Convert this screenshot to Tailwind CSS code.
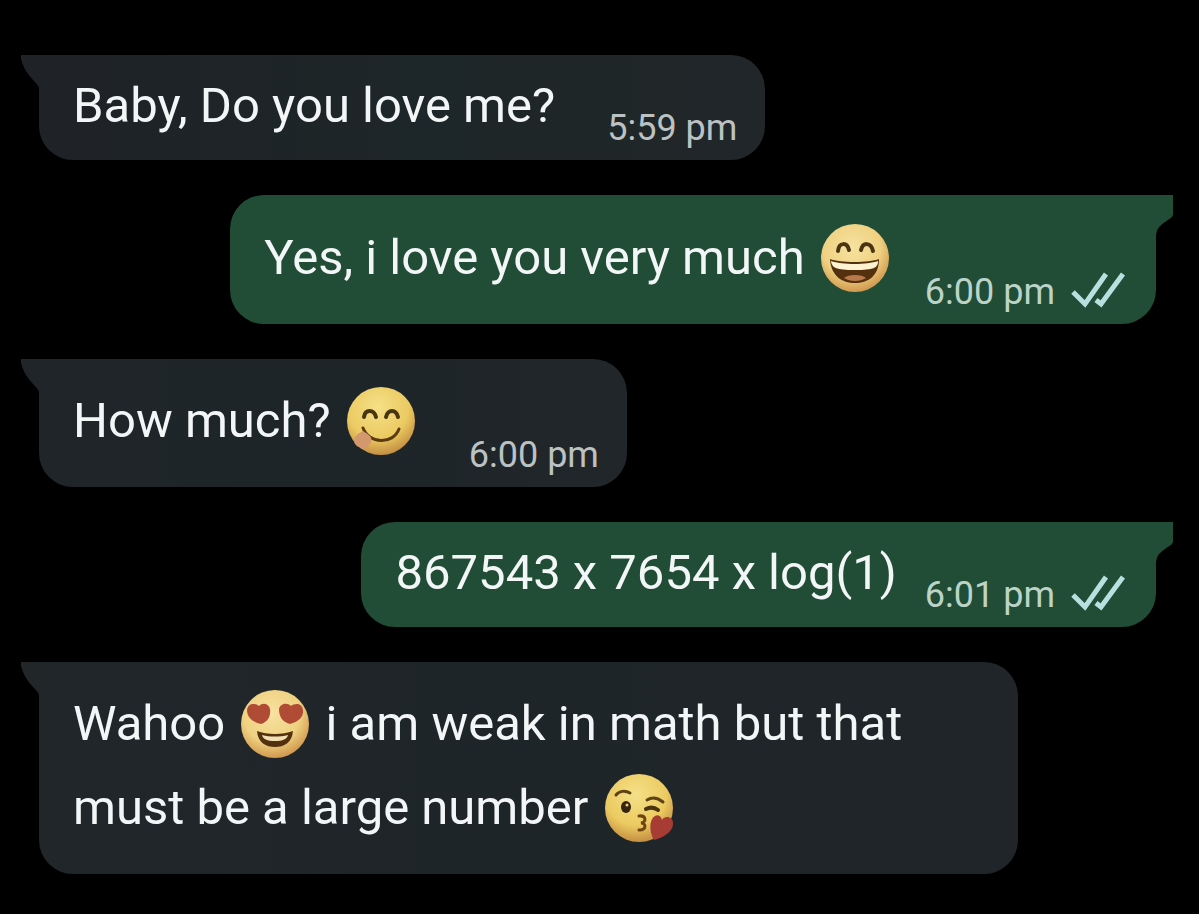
<!DOCTYPE html>
<html lang="en">
<head>
    <meta charset="UTF-8">
    <meta name="viewport" content="width=device-width, initial-scale=1.0">
    <title>Chat</title>
    <script src="https://cdn.jsdelivr.net/npm/@tailwindcss/browser@4"></script>
</head>
<body class="bg-black min-h-screen font-[Roboto,sans-serif] text-[#f3f6f7]">

    <!-- Shared shapes -->
    <svg class="absolute w-0 h-0" aria-hidden="true">
        <defs>
            <radialGradient id="face" cx="0.45" cy="0.35" r="0.65">
                <stop offset="0" stop-color="#f7e2a0"/>
                <stop offset="0.65" stop-color="#efd181"/>
                <stop offset="1" stop-color="#d0994f"/>
            </radialGradient>
            <radialGradient id="face-yellow" cx="0.45" cy="0.3" r="0.7">
                <stop offset="0" stop-color="#f5e088"/>
                <stop offset="0.65" stop-color="#ebca61"/>
                <stop offset="1" stop-color="#c58f43"/>
            </radialGradient>
            <symbol id="tail-in" viewBox="0 0 19 36">
                <path d="M0 0H19V36C18 31 16 29 12 25C6 19 2 12 0 4Z"/>
            </symbol>
            <symbol id="tail-out" viewBox="0 0 19 40">
                <path d="M0 0H18V20C17 23 14 24 10 27C4 31 2 34 1 40H0Z"/>
            </symbol>
            <symbol id="ticks" viewBox="0 0 54 36">
                <path d="M2 20L14 32L35 2M25 28L30 32L52 2" fill="none" stroke="currentColor" stroke-width="5"/>
            </symbol>
        </defs>
    </svg>

    <main>
        <ul class="flex flex-col gap-[35px] pt-[55px] pb-10 pl-[39px] pr-[43px]">

            <li class="relative self-start flex items-end gap-[52px] rounded-[34px] rounded-tl-none bg-linear-to-r from-[#1f2227] via-[#1d2628] to-[#212629] pl-[34px] pr-7">
                <svg class="absolute top-0 -left-[18px] w-[19px] h-9 fill-[#1f2227]" aria-hidden="true"><use href="#tail-in"/></svg>
                <p class="pt-[9px] pb-3 text-[49px] leading-[84px]">Baby, Do you love me?</p>
                <time class="mb-[14px] shrink-0 text-[36px] leading-none text-[#bcc2c3]">5:59 pm</time>
            </li>

            <li class="relative self-end flex items-end gap-8 rounded-[34px] rounded-tr-none bg-[#214d37] pl-[34px] pr-[31px]">
                <svg class="absolute top-0 -right-[18px] w-[19px] h-10 fill-[#214d37]" aria-hidden="true"><use href="#tail-out"/></svg>
                <p class="pt-[21px] pb-6 text-[49px] leading-[84px]">Yes, i love you very much
                    <svg class="inline-block mx-[3px] w-[70px] h-[70px] align-[-19px]" viewBox="0 0 70 70" role="img" aria-label="grinning face">
                        <circle cx="35" cy="35" r="34" fill="url(#face)"/>
                        <path d="M18 28C19 19 27 19 29 27M41 27C43 19 51 19 53 28" fill="none" stroke="#4a3413" stroke-width="4" stroke-linecap="round"/>
                        <path d="M10 36C20 40 49 40 59 36C59 53 48 60 35 60S11 53 10 36Z" fill="#54300f"/>
                        <path d="M11 38C22 42 47 42 58 38C58 45 54 47 35 47S12 45 11 38Z" fill="#fff3d2"/>
                        <path d="M24 55C28 51 42 51 46 55C40 59 30 59 24 55Z" fill="#b87a4c"/>
                    </svg>
                </p>
                <div class="mb-[14px] shrink-0 flex items-end gap-4">
                    <time class="text-[36px] leading-none text-[#bbd4c7]">6:00 pm</time>
                    <svg class="w-[54px] h-9 mb-[2px] text-[#b9e0e0]" role="img" aria-label="Delivered"><use href="#ticks"/></svg>
                </div>
            </li>

            <li class="relative self-start flex items-end gap-[50px] rounded-[34px] rounded-tl-none bg-linear-to-r from-[#202529] via-[#1d2529] to-[#21262a] pl-[34px] pr-7">
                <svg class="absolute top-0 -left-[18px] w-[19px] h-9 fill-[#202529]" aria-hidden="true"><use href="#tail-in"/></svg>
                <p class="pt-5 pb-6 text-[49px] leading-[84px]">How much?
                    <svg class="inline-block mx-[3px] w-[70px] h-[70px] align-[-19px]" viewBox="0 0 70 70" role="img" aria-label="face savoring food">
                        <circle cx="35" cy="35" r="34" fill="url(#face-yellow)"/>
                        <path d="M18 31C19 23 28 23 30 31M40 31C42 23 50 23 52 31" fill="none" stroke="#49360f" stroke-width="4" stroke-linecap="round"/>
                        <path d="M17 42C23 58 47 59 53 43" fill="none" stroke="#5c3a10" stroke-width="3" stroke-linecap="round"/>
                        <path d="M17 45C22 48 27 51 25 56C22 62 17 65 13 61C6 58 6 50 17 45Z" fill="#d4986f"/>
                    </svg>
                </p>
                <time class="mb-[14px] shrink-0 text-[36px] leading-none text-[#bcc2c3]">6:00 pm</time>
            </li>

            <li class="relative self-end flex items-end gap-7 rounded-[34px] rounded-tr-none bg-[#214d37] pl-[34px] pr-[31px]">
                <svg class="absolute top-0 -right-[18px] w-[19px] h-10 fill-[#214d37]" aria-hidden="true"><use href="#tail-out"/></svg>
                <p class="pt-[9px] pb-3 text-[49px] leading-[84px]">867543 x 7654 x log(1)</p>
                <div class="mb-[14px] shrink-0 flex items-end gap-4">
                    <time class="text-[36px] leading-none text-[#bbd4c7]">6:01 pm</time>
                    <svg class="w-[54px] h-9 mb-[2px] text-[#b9e0e0]" role="img" aria-label="Delivered"><use href="#ticks"/></svg>
                </div>
            </li>

            <li class="relative self-start rounded-[34px] rounded-tl-none bg-linear-to-r from-[#212629] via-[#1e2529] to-[#21252a] pl-[34px] pr-[116px]">
                <svg class="absolute top-0 -left-[18px] w-[19px] h-9 fill-[#212629]" aria-hidden="true"><use href="#tail-in"/></svg>
                <p class="pt-5 pb-6 text-[49px] leading-[84px]">Wahoo
                    <svg class="inline-block mx-[3px] w-[70px] h-[70px] align-[-19px]" viewBox="0 0 70 70" role="img" aria-label="heart eyes">
                        <circle cx="35" cy="35" r="34" fill="url(#face)"/>
                        <path d="M21 35C12 33 7 28 7 21C8 14 15 14 19 17C23 13 29 15 30 20C31 27 28 33 21 35Z" fill="#b04b36"/>
                        <path d="M50 35C42 33 39 27 39 20C40 15 47 13 51 17C55 14 62 14 63 21C64 28 58 33 50 35Z" fill="#b04b36"/>
                        <path d="M17 42C27 46 43 46 53 42C52 54 44 58 35 58S18 54 17 42Z" fill="#54300f"/>
                        <path d="M22 46C30 48 40 48 48 46C47 50 43 52 35 52S23 50 22 46Z" fill="#f2dfb4"/>
                    </svg>
                    <span>i am weak in math but that</span><br>
                    <span>must be a large number</span>
                    <svg class="inline-block mx-[3px] w-[70px] h-[70px] align-[-19px]" viewBox="0 0 70 70" role="img" aria-label="face blowing a kiss">
                        <circle cx="35" cy="35" r="34" fill="url(#face-yellow)"/>
                        <path d="M12 22C15 18 21 17 26 20M43 27C48 24 54 25 59 29" fill="none" stroke="#5d4314" stroke-width="3" stroke-linecap="round"/>
                        <ellipse cx="22" cy="34" rx="5" ry="6" fill="#35250d"/>
                        <circle cx="23" cy="32" r="1.5" fill="#e9cf86"/>
                        <path d="M42 36C46 34 50 34 54 37" fill="none" stroke="#49320f" stroke-width="4" stroke-linecap="round"/>
                        <path d="M35 43C42 42 43 49 37 50C43 50 42 58 35 57" fill="none" stroke="#6d4514" stroke-width="3" stroke-linecap="round"/>
                        <path d="M50 67C45 59 45 46 51 43C54 41 57 43 58 47C61 42 68 44 69 49C70 58 61 64 50 67Z" fill="#a63c34"/>
                    </svg>
                </p>
            </li>
        </ul>
    </main>

</body>
</html>
